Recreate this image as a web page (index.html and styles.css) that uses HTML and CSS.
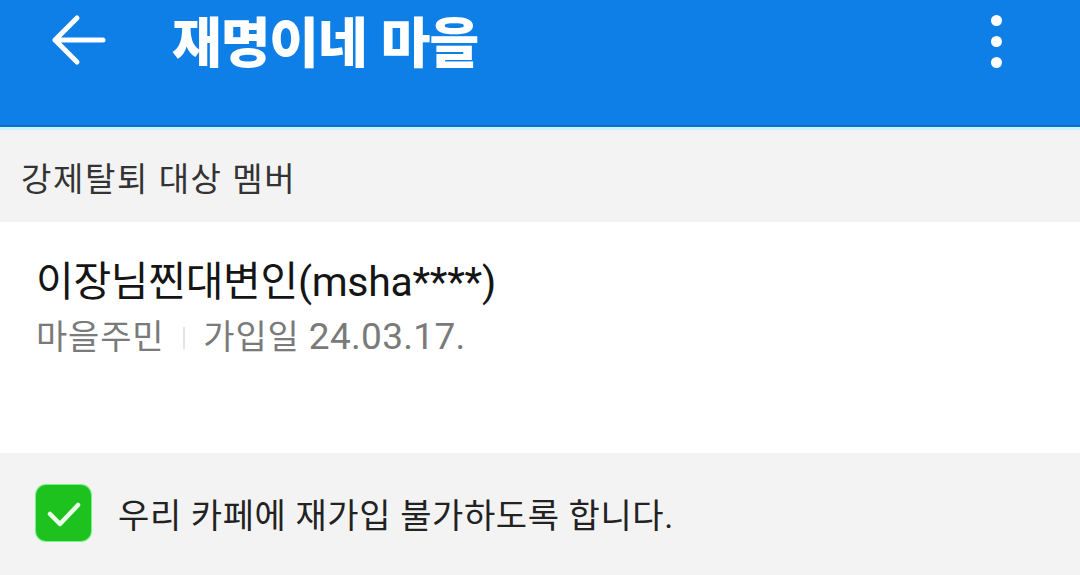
FILE: index.html
```html
<!DOCTYPE html>
<html lang="ko">
<head>
  <meta charset="utf-8">
  <title>재명이네 마을 - 강제탈퇴</title>
  <meta name="viewport" content="width=device-width, initial-scale=1.0">
  <link rel="stylesheet" href="styles.css">
</head>
<body>
  <!-- 상단 바 -->
  <header class="appbar">
    <button class="icon-btn back" aria-label="뒤로">
      <svg width="56" height="52" viewBox="0 0 56 52">
        <path d="M53 26H5M27 4L5 26l22 22" fill="none" stroke="#fff" stroke-width="5" stroke-linecap="round" stroke-linejoin="round"/>
      </svg>
    </button>
    <h1 class="appbar-title">재명이네 마을</h1>
    <button class="icon-btn more" aria-label="더보기">
      <span class="dot"></span><span class="dot"></span><span class="dot"></span>
    </button>
  </header>

  <div class="section-head">강제탈퇴 대상 멤버</div>

  <div class="member">
    <div class="member-name">이장님찐대변인(msha****)</div>
    <div class="member-meta">
      <span>마을주민</span>
      <span class="sep"></span>
      <span>가입일 <span class="date">24.03.17.</span></span>
    </div>
  </div>

  <label class="option">
    <span class="check">
      <svg width="38" height="32" viewBox="0 0 38 32">
        <path d="M5 16l10 10L33 7" fill="none" stroke="#e9ffe9" stroke-width="4.5" stroke-linecap="round" stroke-linejoin="round"/>
      </svg>
    </span>
    <span class="option-text">우리 카페에 재가입 불가하도록 합니다.</span>
  </label>
</body>
</html>
```

FILE: styles.css
```css
* { margin: 0; padding: 0; box-sizing: border-box; }
body {
  font-family: Roboto, "Noto Sans CJK KR", "Noto Sans", sans-serif;
  background: #f3f3f3;
  width: 1080px;
  height: 575px;
  overflow: hidden;
}

/* 상단 바 */
.appbar {
  height: 130px;
  background: #0d7fe6;
  border-bottom: 3px solid #c9f3ff;
  box-shadow: inset 0 -2px 0 #0b6fc9;
  display: flex;
  align-items: flex-start;
  padding: 14px 52px 0 50px;
}
.icon-btn {
  background: none;
  border: none;
  display: flex;
}
.back {
  width: 56px;
  height: 52px;
}
.appbar-title {
  flex: 1;
  margin-left: 66px;
  margin-top: -14px;
  color: #fff;
  font-family: "Noto Sans CJK KR", sans-serif;
  font-size: 54px;
  font-weight: 900;
  letter-spacing: -1px;
  line-height: 80px;
}
.more {
  flex-direction: column;
  align-items: center;
  gap: 10px;
  padding-top: 1px;
  margin-right: 26px;
}
.dot {
  width: 11px;
  height: 11px;
  border-radius: 50%;
  background: #fff;
}

/* 섹션 제목 */
.section-head {
  height: 92px;
  background: #f3f3f3;
  padding: 2px 0 0 21px;
  display: flex;
  align-items: center;
  font-size: 33px;
  color: #333;
  letter-spacing: 1.6px;
}

/* 멤버 정보 */
.member {
  background: #fff;
  height: 231px;
  padding: 30px 36px 0;
}
.member-name {
  font-size: 41px;
  color: #151515;
  line-height: 60px;
  letter-spacing: -0.3px;
}
.member-meta {
  display: flex;
  align-items: center;
  font-size: 34px;
  color: #7a7a7a;
  line-height: 50px;
  letter-spacing: 0.8px;
}
.member-meta .date {
  font-size: 37px;
  letter-spacing: 0.3px;
}
.sep {
  width: 2px;
  height: 22px;
  background: #e4e4e4;
  margin: 2px 18px 0 19px;
}

/* 재가입 옵션 */
.option {
  height: 122px;
  display: flex;
  align-items: center;
  padding: 0 0 2px 36px;
  background: #f3f3f3;
}
.check {
  width: 55px;
  height: 56px;
  border-radius: 10px;
  background: #1ec21e;
  box-shadow: 0 0 0 1px #7cf08a;
  display: flex;
  align-items: center;
  justify-content: center;
  padding-top: 2px;
}
.option-text {
  margin-left: 27px;
  font-size: 34px;
  color: #222;
  letter-spacing: 0.6px;
}
```
